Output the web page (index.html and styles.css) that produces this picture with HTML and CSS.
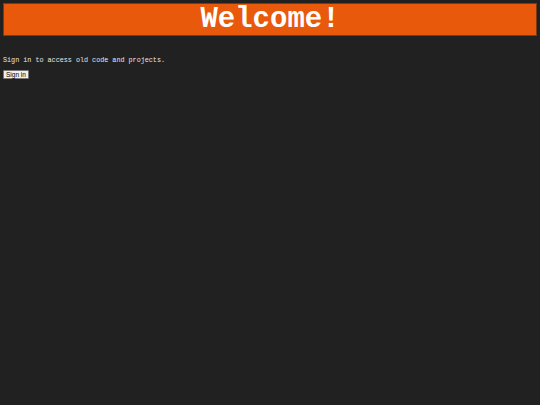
FILE: index.html
```html
<!DOCTYPE html>
<html>
<head>
<meta charset="utf-8">
<link rel="stylesheet" href="styles.css">
</head>
<body>
<h1 class="banner">Welcome!</h1>
<p class="intro">Sign in to access old code and projects.</p>
<button class="signin">Sign in</button>
</body>
</html>
```
FILE: styles.css
```css
html, body {
  background: #212121;
}
body {
  margin: 3px;
  font-family: "Liberation Mono", monospace;
  color: #e8e8e8;
}
.banner {
  margin: 0;
  height: 31px;
  line-height: 31px;
  background: #e8590c;
  border: 1px solid #7a3a14;
  color: #ffffff;
  text-align: center;
  font-family: "Liberation Mono", monospace;
  font-weight: bold;
  font-size: 29px;
}
.intro {
  margin: 20px 0 6px;
  font-size: 6.75px;
  line-height: 8px;
  -webkit-font-smoothing: antialiased;
}
.signin {
  display: block;
  margin: 0;
  padding: 0 2px;
  height: 9px;
  font-family: "Liberation Sans", Arial, sans-serif;
  font-size: 6.5px;
  line-height: 7px;
  background: #f0f0f0;
  border: 1px solid #767676;
  border-radius: 1px;
  color: #000;
}
```
